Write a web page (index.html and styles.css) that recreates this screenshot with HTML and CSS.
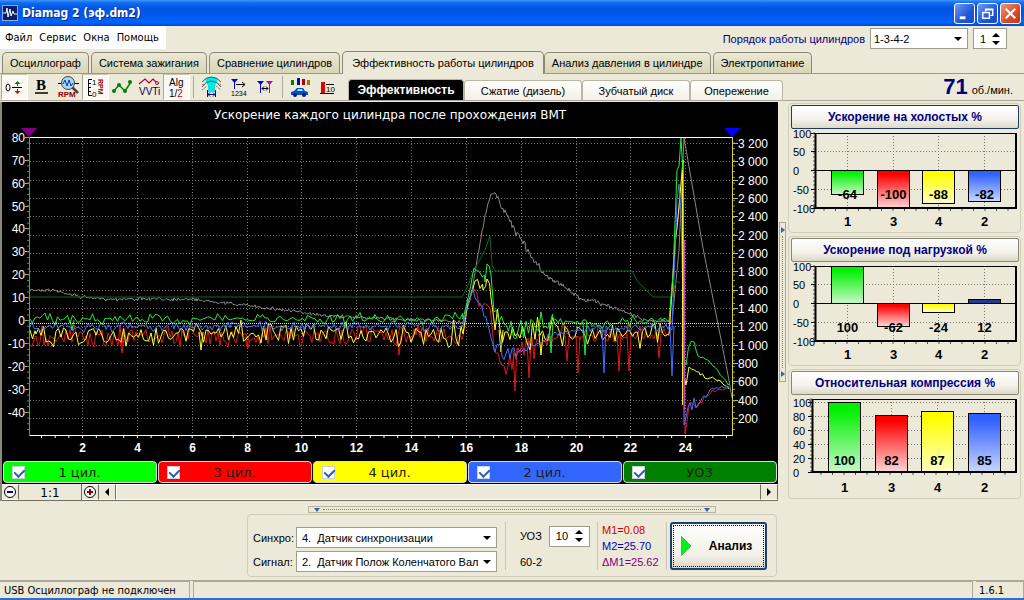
FILE: index.html
```html
<!DOCTYPE html>
<html lang="ru">
<head>
<meta charset="utf-8">
<title>Diamag 2 (эф.dm2)</title>
<link rel="stylesheet" href="styles.css">
</head>
<body>
<header class="titlebar">
  <svg class="app-icon" viewBox="0 0 16 16"><rect width="16" height="16" fill="#0a1f6b"/><rect x=".5" y=".5" width="15" height="15" fill="none" stroke="#8fa8e0"/><path d="M1 8H4L5 3L6 12L8 4L9 11L11 6L12 9H15" fill="none" stroke="#fff"/></svg>
  <h1 class="title">Diamag 2 (эф.dm2)</h1>
  <button class="win-btn" aria-label="Свернуть"><svg viewBox="0 0 20 20"><path d="M5 14.5H11" stroke="#fff" stroke-width="3"/></svg></button>
  <button class="win-btn" aria-label="Восстановить"><svg viewBox="0 0 20 20"><path d="M8 8V5.5H15.500V12H13M8 6H15" fill="none" stroke="#fff" stroke-width="1.500"/><rect x="5" y="9" width="7" height="6" fill="none" stroke="#fff" stroke-width="1.500"/></svg></button>
  <button class="win-btn close" aria-label="Закрыть"><svg viewBox="0 0 20 20"><path d="M5 5L15 15M15 5L5 15" stroke="#fff" stroke-width="2.200"/></svg></button>
</header>

<div class="menubar">
  <nav class="menu"><a href="#">Файл</a><a href="#">Сервис</a><a href="#">Окна</a><a href="#">Помощь</a></nav>
  <div class="order">
    <label for="order">Порядок работы цилиндров</label>
    <span class="combo order-combo"><select id="order"><option>1-3-4-2</option></select></span>
    <span class="spin order-spin"><input type="text" value="1" aria-label="Номер цилиндра"><span class="arrows"><button class="up" aria-label="Больше"></button><button class="down" aria-label="Меньше"></button></span></span>
  </div>
</div>

<nav class="tabs">
  <button>Осциллограф</button><button>Система зажигания</button><button>Сравнение цилиндров</button><button class="active">Эффективность работы цилиндров</button><button>Анализ давления в цилиндре</button><button>Электропитание</button>
</nav>

<div class="toolbar">
  <div class="tools">
    <button class="tool on" aria-label="Ноль"><svg viewBox="0 0 26 26"><ellipse cx="7" cy="13.500" rx="2" ry="3.500" fill="none" stroke="#000"/><path d="M11 13.500H21" stroke="#000"/><path d="M16.500 12V9" stroke="#008000"/><path d="M13.500 10L16.500 7L19.500 10Z" fill="#008000"/><path d="M16.500 15V18" stroke="#e00000"/><path d="M13.500 17L16.500 20L19.500 17Z" fill="#e00000"/></svg></button>
    <button class="tool" aria-label="Жирный"><svg viewBox="0 0 26 26"><text class="bold-letter" x="8" y="16">B</text><path d="M7 19H20" stroke="#000" stroke-width="1.500"/></svg></button>
    <button class="tool" aria-label="Поиск RPM"><svg viewBox="0 0 26 26"><path d="M3 9.500H24" stroke="#000"/><path d="M17 13L23 19" stroke="#444" stroke-width="2.500"/><circle cx="13" cy="9" r="6.500" fill="#a8d8f0" stroke="#444"/><path d="M8 10L10 6L12 12L14 6L16 12L18 9" fill="none" stroke="#1030c0"/><text class="tiny dark-red" x="3" y="23">RPM</text></svg></button>
    <button class="tool on" aria-label="Шкала RPM"><svg viewBox="0 0 26 26"><path d="M10 5.500H6.500V21.500H10M6 9.500H9M6 13.500H9M6 17.500H9" fill="none" stroke="#000"/><text class="tiny" x="10" y="11">1</text><text class="tiny" x="10" y="23">0</text><text class="micro dark-red" x="0" y="0" transform="translate(16 5) rotate(90)">RPM</text></svg></button>
    <button class="tool" aria-label="График"><svg viewBox="0 0 26 26"><path d="M4 18L10 11L16 17L22 8" fill="none" stroke="#008000" stroke-width="1.500"/><g fill="#008000"><circle cx="5" cy="17" r="2"/><circle cx="10" cy="11" r="2"/><circle cx="16" cy="17" r="2"/><circle cx="21" cy="8" r="2"/></g></svg></button>
    <button class="tool" aria-label="VVTi"><svg viewBox="0 0 26 26"><path d="M3 10L9 5L13 9L17 5L20 8" fill="none" stroke="#b00030" stroke-width="1.200"/><circle cx="21" cy="9" r="1.500" fill="none" stroke="#b00030"/><text class="small navy" x="3" y="21">VVTi</text></svg></button>
    <button class="tool on" aria-label="Алгоритм"><svg viewBox="0 0 26 26"><text class="small" x="6" y="12">Alg</text><text class="small" x="6" y="23">1/<tspan fill="#e00000">2</tspan></text></svg></button>
    <span class="sep"></span>
    <button class="tool" aria-label="Датчик"><svg viewBox="0 0 26 26"><path d="M7 5Q13.500 1 20 5L17 12V18H10V12Z" fill="#00e8e8"/><path d="M4 8Q8 3 13.500 3T23 8M4 13Q8 7 13.500 7T23 13" fill="none" stroke="#087070"/><path d="M4 11L8 9M19 9L23 11M4 16L9 12M18 12L23 16" stroke="#e04040" stroke-dasharray="2 1"/><path d="M9.500 16V23M17.500 16V23M10 20.500H17M12 18.500L10 20.500L12 22.500M15 18.500L17 20.500L15 22.500" fill="none" stroke="#0010a0"/></svg></button>
    <button class="tool" aria-label="Маркеры 1234"><svg viewBox="0 0 26 26"><path d="M6 5H13L9.500 9Z" fill="#0000e0"/><path d="M9.500 8V15" stroke="#0000e0"/><path d="M11 10.500H20M17 8L20 10.500L17 13" fill="none" stroke="#000"/><text class="micro" x="6" y="22">1234</text></svg></button>
    <button class="tool" aria-label="Между маркерами"><svg viewBox="0 0 26 26"><path d="M5 7H12L8.500 11Z" fill="#0000e0"/><path d="M8.500 10V19" stroke="#0000e0"/><path d="M14 7H21L17.500 11Z" fill="#c000c0"/><path d="M17.500 10V19" stroke="#c000c0"/><path d="M10 14.500H16M12 12.500L10 14.500L12 16.500M14 12.500L16 14.500L14 16.500" fill="none" stroke="#000"/></svg></button>
    <span class="sep"></span>
    <button class="tool" aria-label="Автомобиль"><svg viewBox="0 0 26 26"><path d="M4 6H7V11H4Z" fill="#008000"/><path d="M10 4H13V11H10Z" fill="#0010a0"/><path d="M15 5H18V11H15Z" fill="#b00000"/><path d="M20 6H23V11H20Z" fill="#908000"/><path d="M4 18L7 17L10 14H16L18 17L21 18V21H4Z" fill="#0050c8"/><path d="M10 17L11 15H15L16 17Z" fill="#a8e0ff"/><circle cx="8" cy="21" r="2" fill="#002060"/><circle cx="17" cy="21" r="2" fill="#002060"/></svg></button>
    <button class="tool" aria-label="Столбцы"><svg viewBox="0 0 26 26"><rect x="7" y="8" width="4" height="11" fill="#e00000"/><path d="M6 19.500H20M12 10.500H20" stroke="#000"/><text class="tiny" x="12" y="18">10</text></svg></button>
  </div>
  <nav class="subtabs"><button class="active">Эффективность</button><button>Сжатие (дизель)</button><button>Зубчатый диск</button><button>Опережение</button></nav>
  <div class="rpm"><strong>71</strong><span>об./мин.</span></div>
</div>

<main class="main">
  <section class="scope">
    <svg id="scope" class="chart" viewBox="2 102 776 358" role="img" aria-label="Ускорение каждого цилиндра"></svg>
    <div class="legend">
      <label class="c1"><input type="checkbox" checked><span>1 цил.</span></label>
      <label class="c3"><input type="checkbox" checked><span>3 цил.</span></label>
      <label class="c4"><input type="checkbox" checked><span>4 цил.</span></label>
      <label class="c2"><input type="checkbox" checked><span>2 цил.</span></label>
      <label class="c5"><input type="checkbox" checked><span>УОЗ</span></label>
    </div>
    <div class="scroller">
      <button aria-label="Уменьшить"><svg viewBox="0 0 14 14"><circle cx="7" cy="7" r="5.500" fill="#fff" stroke="#000"/><path d="M4 7H10" stroke="#000090" stroke-width="2"/></svg></button>
      <span class="scale">1:1</span>
      <button aria-label="Увеличить"><svg viewBox="0 0 14 14"><circle cx="7" cy="7" r="5.500" fill="#fff" stroke="#000"/><path d="M4 7H10M7 4V10" stroke="#900000" stroke-width="2"/></svg></button>
      <button aria-label="Влево"><svg viewBox="0 0 14 14"><path d="M9 3V11L5 7Z"/></svg></button>
      <span class="track"></span>
      <button aria-label="Вправо"><svg viewBox="0 0 14 14"><path d="M5 3V11L9 7Z"/></svg></button>
    </div>
  </section>
  <div class="vsplit"><div class="vhandle"><i></i><span></span><i></i></div></div>
  <aside class="side">
    <section class="card"><button class="head focus">Ускорение на холостых %</button><svg id="idle" class="chart" viewBox="791 130 228 100"></svg></section>
    <section class="card"><button class="head">Ускорение под нагрузкой %</button><svg id="load" class="chart" viewBox="791 130 228 100"></svg></section>
    <section class="card"><button class="head">Относительная компрессия %</button><svg id="comp" class="chart" viewBox="791 130 228 100"></svg></section>
  </aside>
</main>

<div class="hsplit"><i></i><span></span><i></i></div>
<section class="controls">
  <div class="sources">
    <label for="sync">Синхро:</label><span class="combo"><select id="sync"><option>4.&nbsp; Датчик синхронизации</option></select></span>
    <label for="sig">Сигнал:</label><span class="combo"><select id="sig"><option>2.&nbsp; Датчик Полож Коленчатого Вала</option></select></span>
  </div>
  <div class="uoz">
    <div class="uoz-row"><label for="uoz">УОЗ</label><span class="spin"><input id="uoz" type="text" value="10"><span class="arrows"><button class="up" aria-label="Больше"></button><button class="down" aria-label="Меньше"></button></span></span></div>
    <span>60-2</span>
  </div>
  <div class="markers"><span class="m1">M1=0.08</span><span class="m2">M2=25.70</span><span class="dm">ΔM1=25.62</span></div>
  <button class="analyze"><svg viewBox="0 0 10 20"><path d="M0 0L10 10L0 20Z" fill="#00f020" stroke="#40c040"/></svg><span>Анализ</span></button>
</section>

<footer class="status"><span class="msg">USB Осциллограф не подключен</span><span class="fill"></span><span class="ver">1.6.1</span></footer>
<script src="app.js"></script>
</body>
</html>
```
FILE: styles.css
```css
* { box-sizing: border-box; }
body {
  margin: 0;
  min-height: 100vh;
  display: flex;
  flex-direction: column;
  background: #ece9d8;
  border-bottom: 2px solid #2f6fd0;
  font: 11px "Liberation Sans", Arial, sans-serif;
  color: #000;
}
button, input, select { font: inherit; color: inherit; margin: 0; padding: 0; border: 0; background: none; border-radius: 0; }
svg { display: block; }

.titlebar {
  display: flex;
  align-items: center;
  gap: 2px;
  height: 26px;
  padding: 0 3px 0 2px;
  background: linear-gradient(#3a95ff 0, #1169f0 3px, #0054e3 8px, #0058ee 16px, #0066ff 22px, #0048d0 26px);
}
.app-icon { width: 16px; height: 16px; }
.title { flex: 1; margin: 0 0 0 2px; font: bold 12px "DejaVu Sans Condensed", "DejaVu Sans", sans-serif; color: #fff; text-shadow: 1px 1px #0a2a80; }
.win-btn { width: 21px; height: 21px; border: 1px solid #fff; border-radius: 3px; background: linear-gradient(135deg, #6f9bf5, #2355d8 60%, #1a49c4); }
.close { background: linear-gradient(135deg, #f0967a, #dc4a24 60%, #c03a14); }

.menubar { display: flex; justify-content: space-between; height: 25px; }
.menu { display: flex; gap: 7px; align-items: center; width: 166px; height: 23px; padding-left: 5px; background: #fff; font: 11px "DejaVu Sans Condensed", "DejaVu Sans", sans-serif; }
.menu a { color: #000; text-decoration: none; }
.order { display: flex; align-items: center; gap: 5px; padding: 0 17px 0 0; color: #000080; }
.combo { position: relative; display: block; height: 21px; border: 1px solid #a09d8c; background: #fff; color: #000; }
.combo select { display: block; width: 100%; height: 100%; padding: 0 18px 0 5px; appearance: none; }
.combo::after { content: ""; position: absolute; right: 5px; top: 8px; border: 4px solid transparent; border-top-color: #000; border-bottom: 0; pointer-events: none; }
.order-combo { width: 98px; }
.order-combo select { padding-left: 3px; }
.spin { display: flex; width: 41px; height: 21px; border: 1px solid #a09d8c; background: #fff; color: #000; }
.spin input { flex: 1; min-width: 0; padding-left: 6px; }
.order-spin { width: 34px; }
.arrows { display: flex; flex-direction: column; justify-content: center; gap: 4px; width: 14px; }
.up, .down { width: 8px; height: 4px; border: 4px solid transparent; }
.up { border-bottom-color: #000; border-top: 0; }
.down { border-top-color: #000; border-bottom: 0; }

.tabs { display: flex; align-items: flex-end; height: 23px; padding-left: 2px; border-bottom: 1px solid #919b9c; }
.tabs button { height: 21px; margin-right: 2px; padding: 0 7px; border: 1px solid #8a8874; border-bottom: 0; border-radius: 5px 5px 0 0; background: linear-gradient(#ebe8d6, #d8d4b4); white-space: nowrap; }
.tabs .active { height: 23px; margin: 0 0 -1px; padding: 0 9px; background: #ece9d8; }

.toolbar { display: flex; height: 27px; border-bottom: 1px solid #aca899; }
.tools { display: flex; align-items: center; width: 348px; padding-left: 1px; }
.tool { width: 27px; height: 26px; }
.tool.on { background: #faf9f4; border: 1px solid #fff; border-left-color: #aca899; border-top-color: #c8c5b4; }
.tool svg { width: 26px; height: 26px; overflow: visible; }
.tool.on svg { margin: -1px; }
.sep { width: 1px; height: 22px; margin: 0 4px 0 3px; background: #aca899; }
.bold-letter { font: bold 15px "Liberation Serif", serif; }
.small { font: 10px "Liberation Sans", sans-serif; }
.tiny { font: 8px "Liberation Sans", sans-serif; }
.micro { font: 7px "Liberation Sans", sans-serif; }
.dark-red { fill: #900000; font-weight: bold; }
.navy { fill: #000060; }
.subtabs { display: flex; align-items: flex-end; }
.subtabs button { width: 108px; height: 20px; border: 1px solid #b8b5a2; border-bottom: 0; border-radius: 4px 4px 0 0; background: linear-gradient(#fff, #f2f0e6); white-space: nowrap; }
.subtabs button:last-child { width: 93px; }
.subtabs button:nth-child(2) { width: 118px; }
.subtabs .active { width: 116px; height: 21px; background: #000; color: #fff; font-size: 12px; font-weight: bold; }
.rpm { display: flex; flex: 1; align-items: baseline; justify-content: flex-end; gap: 4px; padding-right: 11px; }
.rpm strong { font-size: 22px; line-height: 25px; color: #000080; }

.main { display: flex; padding: 1px 3px 0 0; }
.scope { flex: 1; min-width: 0; border-left: 2px solid #8a8878; background: #000; }
.chart { width: 100%; }
.axis { font: 12px "Liberation Sans", sans-serif; fill: #fff; }
.axis-bold { font: bold 12px "Liberation Sans", sans-serif; fill: #fff; text-anchor: middle; }
.chart-title { font: 12px "DejaVu Sans", sans-serif; fill: #fff; text-anchor: middle; }
.bar-axis { font: 11px "Liberation Sans", sans-serif; }
.bar-label { font: bold 13px "Liberation Sans", sans-serif; text-anchor: middle; }
.legend { display: flex; gap: 1px; height: 24px; padding: 1px; }
.legend label { display: flex; flex: 1; align-items: center; padding: 0 8px; border: 1px solid #d8d8d8; border-radius: 4px; font: 13px "DejaVu Sans", sans-serif; color: #202010; }
.legend span { flex: 1; padding-right: 14px; text-align: center; }
.legend input { position: relative; width: 13px; height: 13px; appearance: none; background: #fff; border: 1px solid #c8d0d8; }
.legend input:checked::after { content: ""; position: absolute; left: 3px; top: 0; width: 5px; height: 8px; border: solid #2f5fb0; border-width: 0 2px 2px 0; transform: rotate(45deg); }
.c1 { background: #0f0; } .c3 { background: #f00; } .c4 { background: #ff0; } .c2 { background: #36f; } .c5 { background: #008000; }
.scroller { display: flex; height: 17px; background: #ece9d8; border-bottom: 1px solid #716f64; }
.scroller button { width: 17px; border: 1px solid #fff; border-right-color: #716f64; border-left: 0; }
.scroller svg { width: 14px; height: 14px; margin: auto; }
.scale { width: 63px; border-right: 1px solid #716f64; text-align: center; font: 12px "DejaVu Sans", sans-serif; line-height: 19px; }
.track { flex: 1; border: 1px solid #fff; border-right: 1px solid #716f64; }

.vsplit { display: flex; align-items: center; width: 10px; }
.vhandle { display: flex; flex-direction: column; align-items: center; justify-content: space-between; width: 7px; height: 160px; margin-left: 1px; padding: 4px 0; border: 1px solid #aca899; }
.vhandle span { flex: 1; margin: 3px 0; border-left: 1px dotted #808070; }
.vhandle i { border: 3px solid transparent; border-left: 4px solid #3a62a8; border-right: 0; }
.side { display: flex; flex-direction: column; gap: 3px; width: 233px; padding-top: 1px; }
.card { padding: 1px 1px 3px 2px; border: 1px solid #d0cdb8; border-radius: 4px; }
.head { display: block; width: 100%; height: 24px; border: 1px solid #8a8874; border-radius: 2px; background: linear-gradient(#fff, #f4f2ea 60%, #ddd9c8); color: #000080; font-size: 12px; font-weight: bold; }
.focus { border-color: #1c3c60; }

.hsplit { display: flex; align-items: center; align-self: center; width: 408px; height: 7px; margin: 5px 0 1px; padding: 0 5px; border: 1px solid #b8b59c; }
.hsplit span { flex: 1; margin: 0 3px; border-top: 1px dotted #808070; }
.hsplit i { border: 3px solid transparent; border-top: 4px solid #3a62a8; border-bottom: 0; }
.controls { display: flex; align-items: center; align-self: center; width: 530px; height: 63px; padding: 0 9px 0 5px; border: 1px solid #d0cdb8; border-radius: 4px; }
.sources { display: grid; grid-template-columns: 43px 201px; row-gap: 3px; align-items: center; padding: 8px 0 0; }
.uoz { display: flex; flex-direction: column; justify-content: space-between; height: 48px; width: 92px; margin-left: 8px; padding: 4px 0 2px 14px; border-left: 1px solid #c8c5b2; }
.uoz-row { display: flex; align-items: center; gap: 7px; }
.markers { display: flex; flex-direction: column; gap: 2px; width: 70px; height: 48px; padding: 1px 0 0 4px; border-left: 1px solid #c8c5b2; border-right: 1px solid #c8c5b2; line-height: 14px; }
.m1 { color: #d00000; } .m2 { color: #0000c0; } .dm { color: #800080; }
.analyze { display: flex; align-items: center; width: 97px; height: 48px; margin-left: auto; padding: 0 9px; border: 2px solid #1c4070; border-radius: 3px; outline: 1px dotted #000; outline-offset: -4px; background: linear-gradient(#fff, #f2f0e8 70%, #dcd8c8); font-size: 12px; font-weight: bold; }
.analyze svg { width: 10px; height: 20px; }
.analyze span { flex: 1; padding-left: 14px; }

.status { display: flex; gap: 3px; height: 18px; margin-top: auto; border-top: 1px solid #aca899; font: 11px "DejaVu Sans Condensed", "DejaVu Sans", sans-serif; line-height: 17px; }
.status span { border: 1px solid #aca899; border-width: 1px 1px 0 0; }
.status .msg { width: 190px; padding-left: 4px; }
.status .fill { flex: 1; border-left-width: 1px; }
.status .ver { width: 48px; padding-left: 3px; }
```
FILE: app.js
```js
const NS = "http://www.w3.org/2000/svg";
function add(parent, tag, attrs, text) {
  const e = document.createElementNS(NS, tag);
  for (const k in attrs) e.setAttribute(k, attrs[k]);
  if (text !== undefined) e.textContent = text;
  parent.appendChild(e);
  return e;
}
function line(p, x1, y1, x2, y2, stroke, extra) {
  return add(p, "path", Object.assign({ d: `M${x1} ${y1}L${x2} ${y2}`, stroke, fill: "none" }, extra));
}

let seed = 7;
function rnd() {
  seed = (seed * 16807) % 2147483647;
  return seed / 2147483647;
}
// Signal built from key points [x, y, noise], with optional narrow spikes x -> y.
function trace(svg, color, pts, step, spikes, width) {
  let d = "M" + pts[0][0] + " " + pts[0][1];
  for (let i = 1; i < pts.length; i++) {
    const [x0, y0] = pts[i - 1];
    const [x1, y1, n] = pts[i];
    for (let x = x0 + step; x < x1; x += step) {
      const y = y0 + (y1 - y0) * (x - x0) / (x1 - x0) + (rnd() + rnd() - 1) * (n || 0);
      d += `L${x.toFixed(1)} ${y.toFixed(1)}`;
    }
    d += `L${x1} ${y1}`;
  }
  add(svg, "path", { d, fill: "none", stroke: color, "stroke-width": width || 1, "stroke-linejoin": "bevel" });
  for (const [x, y, base] of spikes || []) {
    add(svg, "path", { d: `M${x - 2} ${base}L${x} ${y}L${x + 2} ${base}`, fill: "none", stroke: color });
  }
}

function drawScope() {
  const s = document.getElementById("scope");
  add(s, "text", { x: 390, y: 119, class: "chart-title" }, "Ускорение каждого цилиндра после прохождения ВМТ");
  add(s, "path", { d: "M21 128H37L29 137Z", fill: "#800080" });
  add(s, "path", { d: "M724 128H741L732 137Z", fill: "#0000ff" });
  const grid = { "stroke-dasharray": "1 2" };
  for (let i = 1; i <= 12; i++) {
    const x = Math.round(27.3 + 54.83 * i) + 0.5;
    line(s, x, 138, x, 435, "#777", grid);
    add(s, "text", { x, y: 452, class: "axis-bold" }, i * 2);
  }
  for (let i = 1; i <= 16; i++) {
    const y = Math.round(436.300 - 18.330 * i) + 0.5;
    line(s, 30, y, 732, y, "#777", grid);
    line(s, 732, y, 738, y, "#c8c040");
    add(s, "text", { x: 738, y: y + 4, class: "axis" }, i < 5 ? i * 200 : Math.floor(i / 5) + " " + String(i * 200 % 1000).padStart(3, "0"));
  }
  for (let v = 80; v >= -40; v -= 10) {
    const y = Math.round(320 - v * 2.290) + 0.5;
    line(s, 25, y, 30, y, "#90c090");
    add(s, "text", { x: 25, y: y + 4, class: "axis", "text-anchor": "end" }, v);
  }
  for (let y = 143; y < 434; y += 5.730) {
    line(s, 27, y, 29, y, "#40a040");
    line(s, 733, y, 735, y, "#a09830");
  }
  for (let x = 41.500; x < 730; x += 13.700) line(s, x, 436, x, 438, "#fff");

  trace(s, "#888", [[30, 290], [52, 290, 2], [82, 297, 2], [107, 299, 2], [190, 299, 2], [260, 307, 2], [330, 316, 2], [400, 319, 2], [463, 322, 2], [470, 300], [479, 250, 2], [485, 215, 2], [491, 194, 2], [495, 193, 3], [500, 204, 4], [520, 238, 6], [535, 262, 5], [548, 277, 4], [566, 288, 3], [580, 298, 3], [604, 304, 3], [630, 314, 3], [645, 320, 3], [672, 322, 2], [679, 250], [684, 138], [687, 155], [703, 248], [728, 375], [732, 398]], 1, [], 1);
  trace(s, "#0a6a18", [[30, 297], [462, 297], [467, 288], [473, 272], [485, 250], [490, 236], [492, 265], [495, 271], [632, 271], [638, 282], [646, 290], [653, 297], [672, 297], [676, 281], [680, 283]], 4);
  trace(s, "#e01818", [[30, 345], [36, 336, 8], [463, 336, 13], [468, 302, 3], [473, 288, 4], [480, 303, 8], [490, 308, 9], [494, 350, 6], [500, 362, 10], [520, 353, 17], [535, 347, 16], [560, 336, 14], [669, 336, 14], [675, 240, 6], [680, 203, 10], [683, 218], [685, 434], [690, 402, 5], [698, 406, 8], [712, 390, 4], [728, 388, 3]], 2, [[122, 353, 338], [247, 347, 337], [399, 355, 336], [515, 391, 348], [529, 378, 342], [567, 361, 336], [578, 373, 336], [619, 371, 334], [629, 371, 334], [659, 358, 334]]);
  trace(s, "#ffff30", [[30, 330], [36, 334, 8], [463, 334, 15], [468, 302, 3], [475, 281, 5], [483, 290, 10], [487, 279, 6], [491, 298, 8], [495, 330, 8], [505, 332, 24], [560, 334, 19], [669, 334, 16], [675, 245, 6], [680, 195, 8], [683, 160], [684, 375], [686, 385], [689, 367], [700, 375, 5], [718, 380, 4], [729, 389, 3]], 2.500, [[201, 350, 332], [501, 352, 330], [541, 355, 334]]);
  trace(s, "#4070ff", [[30, 327], [463, 326, 6], [467, 305, 3], [473, 289, 3], [480, 304, 6], [487, 322, 8], [495, 352, 8], [502, 356, 16], [520, 350, 14], [538, 343, 7], [560, 332, 4], [580, 330, 4], [669, 326, 5], [672, 330], [677, 200, 6], [679, 184, 5], [681, 215], [683, 300], [684, 425], [690, 403, 6], [698, 404, 12], [712, 388, 4], [729, 387, 3]], 2, [[604, 373, 326], [672, 376, 326]]);
  trace(s, "#20f030", [[30, 319], [463, 319, 7], [468, 298, 3], [474, 268, 4], [482, 277, 8], [485, 282, 12], [487, 264], [491, 275, 12], [494, 312, 6], [499, 322, 14], [506, 325, 16], [545, 326, 20], [553, 319, 6], [590, 322, 11], [669, 321, 8], [673, 275, 6], [677, 170, 12], [679, 166, 10], [681, 138], [683, 175], [684, 360], [686, 365], [689, 346, 4], [694, 342, 8], [698, 356, 4], [708, 360, 4], [729, 384, 3]], 2.500, [[551, 353, 322], [585, 355, 322], [72, 330, 320]]);
  line(s, 684.500, 240, 684.500, 410, "#d040d0");
  line(s, 682.500, 170, 682.500, 405, "#f0f030");
  line(s, 30, 323.500, 732, 323.500, "#a8ffe0", { "stroke-dasharray": "1 1" });
  line(s, 29, 137.500, 733, 137.500, "#fff");
  line(s, 29, 435.500, 733, 435.500, "#fff");
  line(s, 29.500, 137, 29.500, 436, "#40b040");
  line(s, 732.500, 137, 732.500, 436, "#d8d050");
}

const NAMES = ["1", "3", "4", "2"];
const COLORS = ["#00f000", "#ff0000", "#ffff00", "#3060ff"];
const PALE = ["#c8f8c8", "#ffd8d8", "#ffffc8", "#c8d8ff"];
function drawBars(id, o) {
  const s = document.getElementById(id);
  const defs = add(s, "defs", {});
  const y = v => Math.round(o.zero - v * o.scale) + 0.5;
  for (const t of o.ticks) {
    line(s, o.left - 4, y(t), o.left, y(t), "#000");
    line(s, o.left, y(t), 1016, y(t), "#777", { "stroke-dasharray": "1 2" });
    add(s, "text", { x: 793, y: y(t) + 4, class: "bar-axis" }, t);
  }
  for (let yy = o.top; yy < o.bottom; yy += 4) line(s, o.left - 2, yy, o.left, yy, "#555");
  for (let x = o.left + 9; x < 1016; x += 11.500) line(s, x, o.bottom, x, o.bottom + 3, "#555");
  o.values.forEach((v, i) => {
    const cx = o.centers[i] + 0.5;
    const g = add(defs, "linearGradient", { id: id + i, x1: 0, y1: 0, x2: 0, y2: 1 });
    add(g, "stop", { offset: "0.1", "stop-color": COLORS[i] });
    add(g, "stop", { offset: "1", "stop-color": PALE[i] });
    line(s, cx, o.top, cx, o.bottom, "#777", { "stroke-dasharray": "1 2" });
    const a = Math.min(y(v), y(0));
    const h = Math.abs(y(v) - y(0));
    add(s, "rect", { x: cx - 16, y: a, width: 32, height: h, stroke: "#000", fill: v > 0 && v < 20 ? "#203c90" : `url(#${id}${i})` });
    add(s, "text", { x: cx, y: o.textY, class: "bar-label" }, v);
    add(s, "text", { x: cx, y: 227, class: "bar-label" }, NAMES[i]);
  });
  line(s, o.left, y(0), 1017, y(0), "#000");
  line(s, o.left, o.top + 0.5, 1017, o.top + 0.5, "#000");
  line(s, o.left + 0.5, o.top, o.left + 0.5, o.bottom, "#000", { "stroke-width": 2 });
  line(s, o.left, o.bottom, 1017, o.bottom, "#000", { "stroke-width": 2 });
  line(s, 1016, o.top, 1016, o.bottom + 1, "#000", { "stroke-width": 2 });
}
const signed = { left: 815, top: 134, bottom: 209, zero: 171, scale: 0.375, ticks: [100, 50, 0, -50, -100], centers: [847, 893, 938, 984], textY: 200 };
drawScope();
drawBars("idle", Object.assign({}, signed, { values: [-64, -100, -88, -82] }));
drawBars("load", Object.assign({}, signed, { values: [100, -62, -24, 12] }));
drawBars("comp", { left: 812, top: 134, bottom: 207, zero: 207, scale: 0.7, ticks: [100, 80, 60, 40, 20, 0], centers: [844, 891, 937, 984], textY: 200, values: [100, 82, 87, 85] });
```
